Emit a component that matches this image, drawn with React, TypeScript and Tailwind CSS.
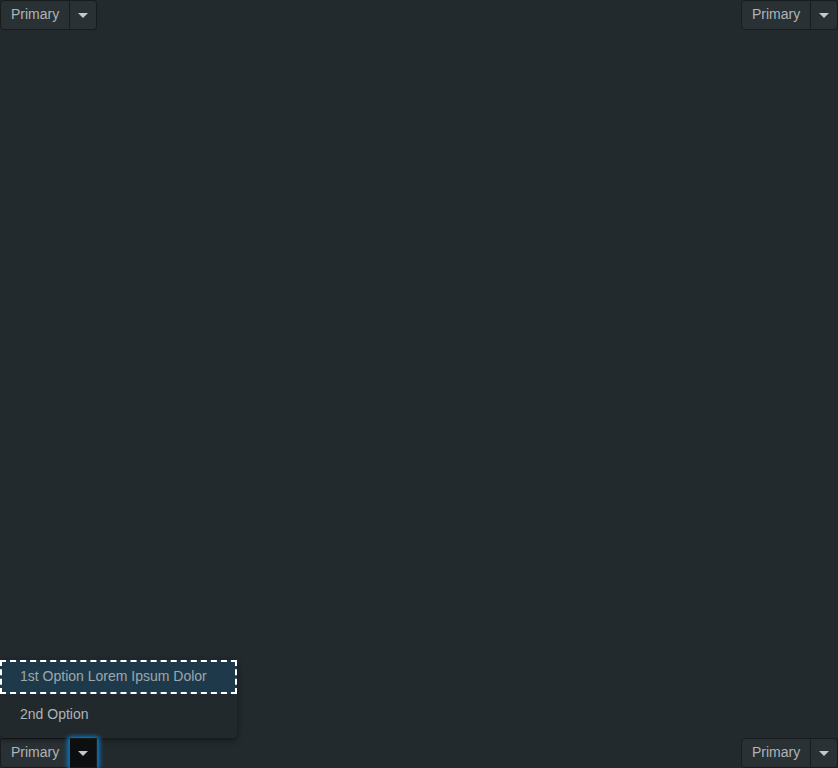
import React from "react";

function Caret() {
  return (
    <svg width="10" height="5" viewBox="0 0 10 5" className="block">
      <path d="M0 0 L10 0 L5 5 Z" fill="#c3c8cb" />
    </svg>
  );
}

function SplitButton({ active = false }: { active?: boolean }) {
  return (
    <div className="flex h-[30px]">
      <button className="h-full w-[70px] rounded-l-[4px] border border-[#171c1f] bg-[#2a3135] text-[14px] text-[#aeb4b8] flex items-center pl-[10px] pb-[2px]">
        Primary
      </button>
      {active ? (
        <button className="relative h-full w-[27px] border border-[#171c1f] border-l-0 bg-[#0c0e10] flex items-center justify-center shadow-[-2px_0_4px_1px_#0b6fb3,2px_0_4px_1px_#0b6fb3]">
          <Caret />
        </button>
      ) : (
        <button className="h-full w-[27px] rounded-r-[4px] border border-[#171c1f] border-l-0 bg-[#2a3135] flex items-center justify-center">
          <Caret />
        </button>
      )}
    </div>
  );
}

export default function App() {
  return (
    <div
      className="h-[768px] w-[838px] bg-[#232a2d] flex flex-col justify-between overflow-hidden"
      style={{ fontFamily: '"Liberation Sans", Arial, sans-serif' }}
    >
      <div className="flex justify-between">
        <SplitButton />
        <SplitButton />
      </div>
      <div className="flex justify-between items-end">
        <div className="relative">
          <div className="absolute bottom-full left-0 w-[237px] bg-[#22292c] rounded-b-[4px] shadow-[0_2px_6px_rgba(0,0,0,0.45)] pb-[6px]">
            <div className="h-[34px] border-2 border-dashed border-white bg-[#1e3a4a] flex items-center pl-[18px] pb-[2px] text-[14px] text-[#9fa7ac]">
              1st Option Lorem Ipsum Dolor
            </div>
            <div className="h-[38px] flex items-center pl-[20px] pt-[2px] text-[14px] text-[#aeb4b8]">
              2nd Option
            </div>
          </div>
          <SplitButton active />
        </div>
        <SplitButton />
      </div>
    </div>
  );
}
